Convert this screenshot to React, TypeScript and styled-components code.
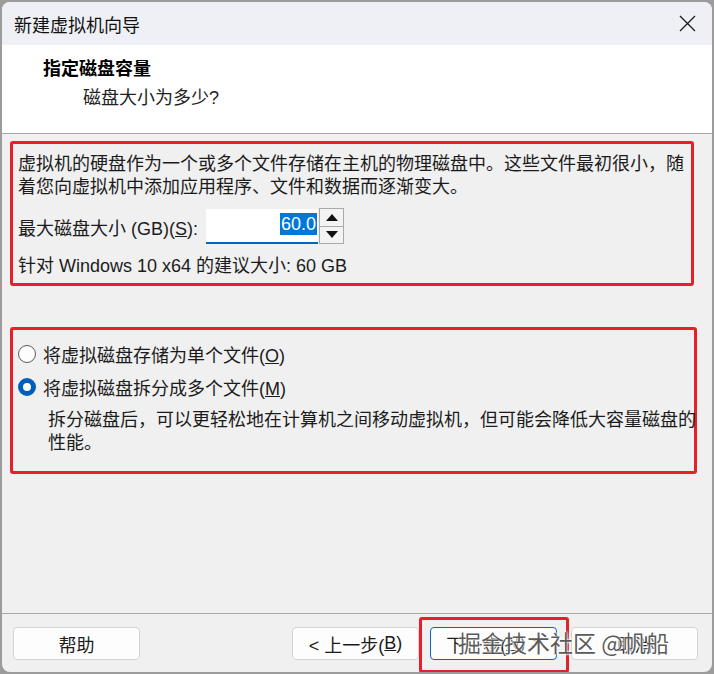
import styled, { createGlobalStyle } from "styled-components";

const GlobalStyle = createGlobalStyle`
  html, body {
    margin: 0;
    padding: 0;
    background: #9c9c9c;
  }
  body {
    font-family: "Liberation Sans", "Noto Sans CJK SC", sans-serif;
    color: #1b1b1b;
  }
`;

const Window = styled.div`
  margin: 2px 0 0 2px;
  width: 710px;
  height: 670px;
  border-radius: 8px;
  overflow: hidden;
  background: #f0f0f0;
  display: flex;
  flex-direction: column;
  box-sizing: border-box;
`;

const TitleBar = styled.div`
  height: 43px;
  flex: none;
  background: #eff0f5;
  display: flex;
  align-items: center;
  justify-content: space-between;
  padding: 0 16px 0 12px;
  font-size: 18px;
  color: #111;
`;

const CloseIcon = () => (
  <svg width="17" height="17" viewBox="0 0 17 17">
    <path d="M1 1 L16 16 M16 1 L1 16" stroke="#1a1a1a" strokeWidth="1.3" />
  </svg>
);

const Header = styled.div`
  height: 89px;
  flex: none;
  background: #fff;
  border-bottom: 1px solid #a9a9a9;
  box-sizing: border-box;
  padding: 12px 0 0 41px;
`;

const HeaderTitle = styled.div`
  font-size: 18px;
  font-weight: 700;
  line-height: 24px;
  color: #000;
`;

const HeaderSub = styled.div`
  font-size: 18px;
  line-height: 24px;
  margin-top: 5px;
  padding-left: 40px;
  color: #222;
`;

const Body = styled.div`
  flex: 1;
  padding: 7px 0 0 8px;
  display: flex;
  flex-direction: column;
`;

const RedBox = styled.div<{ $w: number; $pt: number; $pb: number }>`
  width: ${(p) => p.$w}px;
  box-sizing: border-box;
  border: 3px solid #e3212b;
  border-radius: 3px;
  padding: ${(p) => p.$pt}px 0 ${(p) => p.$pb}px 5px;
`;

const Para = styled.div<{ $indent?: number }>`
  font-size: 18px;
  line-height: 23px;
  white-space: nowrap;
  padding-left: ${(p) => p.$indent ?? 0}px;
`;

const SizeRow = styled.div`
  display: flex;
  align-items: center;
  margin-top: 10px;
  height: 35px;
  font-size: 18px;
  gap: 8px;
`;

const Spin = styled.div`
  display: flex;
  align-items: stretch;
  height: 35px;
`;

const SpinInput = styled.div`
  width: 112px;
  box-sizing: border-box;
  background: #fff;
  border-bottom: 2px solid #0067c0;
  display: flex;
  align-items: flex-start;
  justify-content: flex-end;
  padding: 4px 1px 0 0;
`;

const Selected = styled.span`
  background: #0078d7;
  color: #fff;
  font-size: 18px;
  line-height: 22px;
  padding: 0 1px;
`;

const SpinButtons = styled.div`
  width: 25px;
  margin-left: 1px;
  margin-top: -1px;
  border: 1px solid #a9a9a9;
  display: flex;
  flex-direction: column;
  box-sizing: border-box;
`;

const SpinHalf = styled.div<{ $top?: boolean }>`
  flex: 1;
  display: flex;
  align-items: center;
  justify-content: center;
  background: #f3f3f3;
  border-bottom: ${(p) => (p.$top ? "1px solid #a9a9a9" : "none")};
`;

const Arrow = ({ up }: { up?: boolean }) => (
  <svg width="12" height="7" viewBox="0 0 12 7">
    <path d={up ? "M0 7 L6 0 L12 7 Z" : "M0 0 L12 0 L6 7 Z"} fill="#111" />
  </svg>
);

const Recommend = styled.div`
  font-size: 18px;
  line-height: 23px;
  margin-top: 11px;
`;

const Gap = styled.div`
  height: 41px;
`;

const RadioRow = styled.div<{ $mt?: number }>`
  display: flex;
  align-items: center;
  height: 26px;
  margin-top: ${(p) => p.$mt ?? 0}px;
  font-size: 18px;
  gap: 7px;
`;

const RadioDot = styled.span<{ $on?: boolean }>`
  width: 18px;
  height: 18px;
  box-sizing: border-box;
  border-radius: 50%;
  flex: none;
  background: ${(p) => (p.$on ? "#fff" : "#fdfdfd")};
  border: ${(p) => (p.$on ? "5px solid #005fb8" : "1px solid #5a5a5a")};
`;

const Desc = styled.div`
  margin-top: 9px;
`;

const Footer = styled.div`
  position: relative;
  height: 59px;
  flex: none;
  border-top: 1px solid #a9a9a9;
  box-sizing: border-box;
  padding: 13px 14px 0 11px;
  display: flex;
  align-items: flex-start;
`;

const Button = styled.div<{ $primary?: boolean; $ml?: number }>`
  width: 127px;
  height: 33px;
  box-sizing: border-box;
  margin-left: ${(p) => p.$ml ?? 0}px;
  background: #fdfdfd;
  border: 1px solid ${(p) => (p.$primary ? "#0067c0" : "#d3d3d3")};
  border-radius: 4px;
  display: flex;
  align-items: center;
  justify-content: center;
  font-size: 18px;
  color: #1b1b1b;
`;

const Spacer = styled.div`
  flex: 1;
`;

const Annotation = styled.div`
  position: absolute;
  left: 417px;
  top: 3px;
  width: 150px;
  height: 56px;
  box-sizing: border-box;
  border: 3px solid #e3212b;
  border-radius: 3px;
`;

const Watermark = styled.div`
  position: absolute;
  left: 456px;
  top: 13px;
  font-size: 23px;
  line-height: 30px;
  white-space: nowrap;
  color: rgba(60, 60, 60, 0.85);
  text-shadow: 0 0 2px #fff, 0 0 2px #fff, 0 0 3px #fff;
  font-family: "Noto Sans CJK SC", sans-serif;
`;

export default function App() {
  return (
    <>
      <GlobalStyle />
      <Window>
        <TitleBar>
          <span>新建虚拟机向导</span>
          <CloseIcon />
        </TitleBar>
        <Header>
          <HeaderTitle>指定磁盘容量</HeaderTitle>
          <HeaderSub>磁盘大小为多少?</HeaderSub>
        </Header>
        <Body>
          <RedBox $w={684} $pt={9} $pb={5}>
            <Para>虚拟机的硬盘作为一个或多个文件存储在主机的物理磁盘中。这些文件最初很小，随</Para>
            <Para>着您向虚拟机中添加应用程序、文件和数据而逐渐变大。</Para>
            <SizeRow>
              <span>
                最大磁盘大小 (GB)(<u>S</u>):
              </span>
              <Spin>
                <SpinInput>
                  <Selected>60.0</Selected>
                </SpinInput>
                <SpinButtons>
                  <SpinHalf $top>
                    <Arrow up />
                  </SpinHalf>
                  <SpinHalf>
                    <Arrow />
                  </SpinHalf>
                </SpinButtons>
              </Spin>
            </SizeRow>
            <Recommend>针对 Windows 10 x64 的建议大小: 60 GB</Recommend>
          </RedBox>
          <Gap />
          <RedBox $w={687} $pt={11} $pb={16}>
            <RadioRow>
              <RadioDot />
              <span>
                将虚拟磁盘存储为单个文件(<u>O</u>)
              </span>
            </RadioRow>
            <RadioRow $mt={7}>
              <RadioDot $on />
              <span>
                将虚拟磁盘拆分成多个文件(<u>M</u>)
              </span>
            </RadioRow>
            <Desc>
              <Para $indent={30}>拆分磁盘后，可以更轻松地在计算机之间移动虚拟机，但可能会降低大容量磁盘的</Para>
              <Para $indent={30}>性能。</Para>
            </Desc>
          </RedBox>
        </Body>
        <Footer>
          <Button>帮助</Button>
          <Spacer />
          <Button>
            &lt; 上一步(<u>B</u>)
          </Button>
          <Button $primary $ml={11}>
            下一步(<u>N</u>) &gt;
          </Button>
          <Button $ml={14}>取消</Button>
          <Annotation />
          <Watermark>掘金技术社区 @帆船</Watermark>
        </Footer>
      </Window>
    </>
  );
}
